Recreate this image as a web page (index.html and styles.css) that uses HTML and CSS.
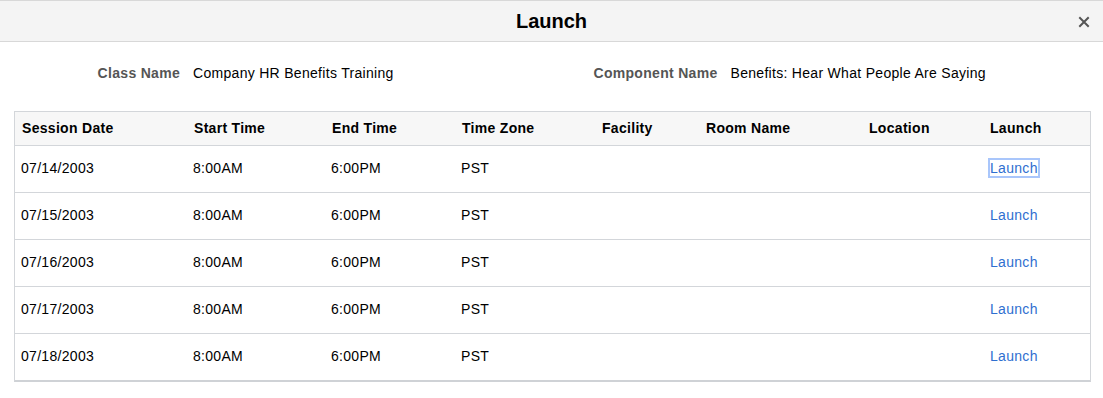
FILE: index.html
```html
<!DOCTYPE html>
<html lang="en">
<head>
    <meta charset="UTF-8">
    <title>Launch</title>
    <link rel="stylesheet" href="styles.css">
</head>
<body>
    <div class="modal">
        <div class="modal-header">
            <h1>Launch</h1>
            <button class="close" aria-label="Close">
                <svg width="12" height="12" viewBox="0 0 12 12"><path d="M2 2 L10 10 M10 2 L2 10" stroke="#555" stroke-width="2" stroke-linecap="square"/></svg>
            </button>
        </div>

        <div class="info-row">
            <div class="field">
                <span class="label">Class Name</span>
                <span class="value">Company HR Benefits Training</span>
            </div>
            <div class="field">
                <span class="label">Component Name</span>
                <span class="value">Benefits: Hear What People Are Saying</span>
            </div>
        </div>

        <div class="grid-wrap">
            <table class="sessions">
                <colgroup>
                    <col style="width:172px">
                    <col style="width:138px">
                    <col style="width:130px">
                    <col style="width:140px">
                    <col style="width:104px">
                    <col style="width:163px">
                    <col style="width:121px">
                    <col>
                </colgroup>
                <thead>
                    <tr>
                        <th>Session Date</th>
                        <th>Start Time</th>
                        <th>End Time</th>
                        <th>Time Zone</th>
                        <th>Facility</th>
                        <th>Room Name</th>
                        <th>Location</th>
                        <th>Launch</th>
                    </tr>
                </thead>
                <tbody>
                    <tr>
                        <td>07/14/2003</td><td>8:00AM</td><td>6:00PM</td><td>PST</td><td></td><td></td><td></td>
                        <td><a href="#" class="launch focused">Launch</a></td>
                    </tr>
                    <tr>
                        <td>07/15/2003</td><td>8:00AM</td><td>6:00PM</td><td>PST</td><td></td><td></td><td></td>
                        <td><a href="#" class="launch">Launch</a></td>
                    </tr>
                    <tr>
                        <td>07/16/2003</td><td>8:00AM</td><td>6:00PM</td><td>PST</td><td></td><td></td><td></td>
                        <td><a href="#" class="launch">Launch</a></td>
                    </tr>
                    <tr>
                        <td>07/17/2003</td><td>8:00AM</td><td>6:00PM</td><td>PST</td><td></td><td></td><td></td>
                        <td><a href="#" class="launch">Launch</a></td>
                    </tr>
                    <tr>
                        <td>07/18/2003</td><td>8:00AM</td><td>6:00PM</td><td>PST</td><td></td><td></td><td></td>
                        <td><a href="#" class="launch">Launch</a></td>
                    </tr>
                </tbody>
            </table>
        </div>
    </div>
</body>
</html>
```

FILE: styles.css
```css
body {
    margin: 0;
    font-family: "Liberation Sans", Arial, sans-serif;
    font-size: 14px;
    letter-spacing: 0.3px;
    color: #000;
    background: #fff;
}
.modal {
    width: 1103px;
}
.modal-header {
    position: relative;
    height: 40px;
    background: #f4f4f4;
    border-top: 1px solid #d8d8d8;
    border-bottom: 1px solid #d8d8d8;
    display: flex;
    align-items: center;
    justify-content: center;
}
.modal-header h1 {
    margin: 0;
    font-size: 20px;
    font-weight: bold;
    letter-spacing: 0;
    color: #000;
}
.close {
    position: absolute;
    right: 13px;
    top: 15px;
    background: none;
    border: none;
    padding: 0;
    width: 12px;
    height: 12px;
    cursor: pointer;
}
.close svg {
    display: block;
}
.info-row {
    display: flex;
    padding: 23px 14px 0;
    height: 46px;
}
.field {
    flex: 1;
    display: flex;
    align-items: baseline;
}
.label {
    width: 166px;
    text-align: right;
    font-weight: bold;
    color: #555;
    margin-right: 13px;
}
.value {
    color: #000;
}
.grid-wrap {
    margin: 0 12px 0 14px;
    border: 1px solid #d3d6da;
    border-bottom: 2px solid #cfd2d6;
}
.sessions {
    width: 100%;
    border-collapse: collapse;
    table-layout: fixed;
}
.sessions th {
    background: #f7f7f7;
    text-align: left;
    font-weight: bold;
    height: 32px;
    padding: 0 0 1px 7px;
    border-bottom: 1px solid #d3d6da;
}
.sessions td {
    height: 43px;
    padding: 0 0 3px 6px;
    border-bottom: 1px solid #d3d6da;
}
.sessions tbody tr:last-child td {
    border-bottom: none;
}
.launch {
    color: #2f6fd0;
    text-decoration: none;
    margin-left: 1px;
}
.launch.focused {
    outline: 2px solid #a9c6fb;
    outline-offset: 0;
}
```
